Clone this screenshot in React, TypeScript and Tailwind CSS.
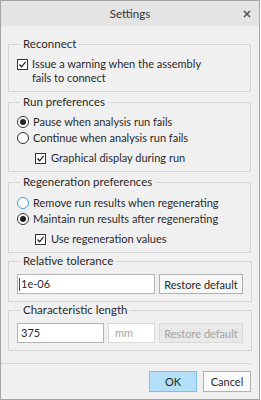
import React from 'react';

const font = { fontFamily: 'Lato, "Noto Sans", Arial, sans-serif' };

function CheckBox() {
  return (
    <span className="w-[11px] h-[11px] border border-[#333] bg-white flex items-center justify-center shrink-0">
      <svg width="9" height="9" viewBox="0 0 9 9">
        <path d="M1.5 4.5 L3.6 6.8 L7.6 1.8" fill="none" stroke="#222" strokeWidth="1.3" />
      </svg>
    </span>
  );
}

function Radio({ checked, hover }: { checked?: boolean; hover?: boolean }) {
  return (
    <span
      className={
        'w-[12px] h-[12px] rounded-full border bg-white flex items-center justify-center shrink-0 ' +
        (hover ? 'border-[#3d9be0]' : 'border-[#333]')
      }
    >
      {checked && <span className="w-[6px] h-[6px] rounded-full bg-[#222]" />}
    </span>
  );
}

function Group({ title, children, className }: { title: string; children: React.ReactNode; className?: string }) {
  return (
    <fieldset className={'border border-[#d4d4d4] px-[8px] ' + (className ?? '')}>
      <legend className="ml-[3px] px-[3px] leading-[14px] text-[11.5px] text-[#2a2a2a]">{title}</legend>
      {children}
    </fieldset>
  );
}

export default function App() {
  return (
    <div style={font} className="w-[260px] h-[400px] border border-[#a3a3a3] bg-[#f0f0f0] flex flex-col text-[11px] text-[#2a2a2a] whitespace-nowrap">
      <div className="h-[25px] bg-[#e4e4e4] flex items-center justify-center relative">
        <span className="text-[11.5px] text-[#333]">Settings</span>
        <svg className="absolute right-[8px] top-[9px]" width="8" height="8" viewBox="0 0 8 8">
          <path d="M1 1 L7 7 M7 1 L1 7" stroke="#555" strokeWidth="1.6" />
        </svg>
      </div>

      <div className="pl-[7px] pr-[8px] pt-[11px] flex flex-col">
        <Group title="Reconnect" className="pb-[6px]">
          <div className="pt-[6px] flex gap-[4px] leading-[14px]">
            <span className="mt-[2px]"><CheckBox /></span>
            <span>
              Issue a warning when the assembly
              <br />
              fails to connect
            </span>
          </div>
        </Group>

        <Group title="Run preferences" className="mt-[3px] pb-[6px]">
          <div className="pt-[6px] flex flex-col leading-[14px]">
            <div className="flex items-center gap-[4px]">
              <Radio checked />
              <span>Pause when analysis run fails</span>
            </div>
            <div className="flex items-center gap-[4px] mt-[2px]">
              <Radio />
              <span>Continue when analysis run fails</span>
            </div>
            <div className="flex items-center gap-[5px] mt-[6px] pl-[18px]">
              <CheckBox />
              <span>Graphical display during run</span>
            </div>
          </div>
        </Group>

        <Group title="Regeneration preferences" className="mt-[3px] pb-[6px]">
          <div className="pt-[7px] flex flex-col leading-[14px]">
            <div className="flex items-center gap-[4px]">
              <Radio hover />
              <span>Remove run results when regenerating</span>
            </div>
            <div className="flex items-center gap-[4px] mt-[2px]">
              <Radio checked />
              <span>Maintain run results after regenerating</span>
            </div>
            <div className="flex items-center gap-[5px] mt-[6px] pl-[18px]">
              <CheckBox />
              <span>Use regeneration values</span>
            </div>
          </div>
        </Group>

        <Group title="Relative tolerance" className="mt-[1px] pb-[7px]">
          <div className="pt-[6px] flex gap-[4px]">
            <div className="w-[138px] h-[20px] border border-[#b4b4b4] bg-white flex items-center pl-[1px]">
              <span className="w-[1px] h-[13px] bg-[#1f4f9a] mr-[1px]" />
              <span>1e-06</span>
            </div>
            <button className="w-[84px] h-[20px] border border-[#b0b0b0] bg-[#f7f7f7] text-[11px] text-[#2a2a2a] leading-none">
              Restore default
            </button>
          </div>
        </Group>

        <Group title="Characteristic length" className="mt-[1px] pb-[7px]">
          <div className="pt-[6px] flex gap-[4px]">
            <div className="w-[87px] h-[20px] border border-[#b4b4b4] bg-white flex items-center pl-[3px]">375</div>
            <div className="w-[47px] h-[20px] border border-[#d9d9d9] bg-white flex items-center pl-[6px] text-[#a3a3a3]">mm</div>
            <button className="w-[84px] h-[20px] border border-[#d9d9d9] bg-[#e9e9e9] text-[11px] text-[#a3a3a3] leading-none">
              Restore default
            </button>
          </div>
        </Group>
      </div>

      <div className="mt-[12px] mr-[8px] h-px bg-[#d6d6d6]" />

      <div className="flex justify-end gap-[6px] pr-[8px] pt-[7px]">
        <button className="w-[48px] h-[21px] border border-[#7fc0ea] bg-[#b3dff8] text-[11px] text-[#2a2a2a] leading-none">OK</button>
        <button className="w-[48px] h-[21px] border border-[#b0b0b0] bg-[#fbfbfb] text-[11px] text-[#2a2a2a] leading-none">Cancel</button>
      </div>
    </div>
  );
}
